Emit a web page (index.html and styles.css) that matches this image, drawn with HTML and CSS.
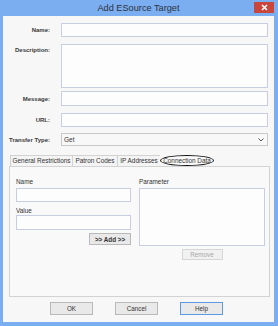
FILE: index.html
```html
<!DOCTYPE html>
<html>
<head>
  <title>Add ESource Target</title>
  <link rel="stylesheet" href="styles.css">
</head>
<body>
  <div class="window">
    <div class="titlebar">
      <span></span>
      <div class="title">Add ESource Target</div>
      <div class="close">
        <svg width="7" height="7" viewBox="0 0 7 7"><path d="M1 1L6 6M6 1L1 6" stroke="#fff" stroke-width="1.6"/></svg>
      </div>
    </div>

    <div class="client">
      <div class="row">
        <span class="lbl">Name:</span>
        <div class="input"></div>
      </div>
      <div class="row row-top gap7">
        <span class="lbl lbl-desc">Description:</span>
        <div class="input area"></div>
      </div>
      <div class="row gap3">
        <span class="lbl">Message:</span>
        <div class="input msg"></div>
      </div>
      <div class="row gap7">
        <span class="lbl">URL:</span>
        <div class="input"></div>
      </div>
      <div class="row gap6">
        <span class="lbl">Transfer Type:</span>
        <div class="input select">
          <span>Get</span>
          <svg width="6" height="4" viewBox="0 0 6 4"><path d="M0.5 0.5L3 3L5.5 0.5" fill="none" stroke="#555" stroke-width="1"/></svg>
        </div>
      </div>

      <div class="tabs">
        <div class="tab t1">General Restrictions</div>
        <div class="tab t2">Patron Codes</div>
        <div class="tab t3">IP Addresses</div>
        <div class="tab active">Connection Data</div>
      </div>
      <div class="panel">
        <div class="col-left">
          <div class="plbl">Name</div>
          <div class="input pin"></div>
          <div class="plbl plbl-value">Value</div>
          <div class="input pin pin-value"></div>
          <div class="btn add">&gt;&gt; Add &gt;&gt;</div>
        </div>
        <div class="col-right">
          <div class="plbl">Parameter</div>
          <div class="input list"></div>
          <div class="btn remove">Remove</div>
        </div>
      </div>

      <div class="actions">
        <div class="btn dlg">OK</div>
        <div class="btn dlg">Cancel</div>
        <div class="btn dlg default">Help</div>
      </div>
    </div>
  </div>
</body>
</html>
```

FILE: styles.css
```css
body { margin: 0; font-family: "Liberation Sans", Arial, sans-serif; }

.window {
  width: 278px; height: 326px; box-sizing: border-box;
  background: #7aaef0; padding: 0 4px 4px 3px;
  display: flex; flex-direction: column;
}
.titlebar {
  height: 17px; display: grid; grid-template-columns: 1fr auto 1fr; align-items: center;
}
.title { font-size: 9.2px; color: #2d3140; }
.close {
  justify-self: end; align-self: start; margin-top: 2px;
  width: 20px; height: 11px; background: #c8463c;
  display: flex; align-items: center; justify-content: center;
}

.client {
  flex: 1; background: #f7f7f7; padding: 7px 4px 7px 0;
  display: flex; flex-direction: column;
}
.row { display: flex; align-items: center; }
.row-top { align-items: flex-start; }
.gap7 { margin-top: 7px; }
.gap6 { margin-top: 6px; }
.gap3 { margin-top: 3px; }
.lbl {
  width: 47px; margin-right: 11px; text-align: right;
  font-size: 6px; font-weight: bold; color: #3a3a3a;
}
.lbl-desc { margin-top: 3px; }

.input {
  width: 207px; height: 14px; box-sizing: border-box;
  border: 1px solid #c6cee0; background: #fdfdfe;
}
.area { height: 44px; }
.msg { height: 15px; }
.select {
  height: 13px; background: #f8f8f8; border-color: #c9c9c9;
  display: flex; align-items: center; justify-content: space-between;
  padding: 0 3px 0 2px; font-size: 6.5px; color: #333;
}

.tabs { display: flex; margin: 9px 0 0 7px; height: 11px; }
.tab {
  box-sizing: border-box; height: 11px; line-height: 10px;
  font-size: 6.4px; color: #333; text-align: center;
  border: 1px solid #d2d2d2; border-bottom: none; border-right: none;
  background: #f4f4f4;
}
.t1 { width: 62px; }
.t2 { width: 45px; }
.t3 { width: 43px; }
.tab.active {
  width: 54px; background: #fafafa;
  border: 1.5px solid #111; border-radius: 50%;
}

.panel {
  height: 131px; box-sizing: border-box; margin-left: 6px;
  border: 1px solid #d3d3d3; background: #f9f9f9;
  padding: 10px 4px 0 6px; display: flex; gap: 8px;
}
.col-left { width: 115px; display: flex; flex-direction: column; }
.col-right { width: 126px; display: flex; flex-direction: column; }
.plbl { font-size: 6.4px; color: #333; line-height: 10px; margin-bottom: 1px; }
.plbl-value { line-height: 9px; margin: 4px 0 0; }
.pin { width: 115px; }
.pin-value { height: 15px; }
.list { width: 126px; height: 58px; }

.btn {
  box-sizing: border-box; display: flex; align-items: center; justify-content: center;
  border: 1px solid #b9b9b9; background: #e9e9e9; font-size: 6.3px; color: #333;
}
.add { align-self: flex-end; width: 42px; height: 12px; margin-top: 3px; font-weight: bold; }
.remove {
  align-self: center; width: 41px; height: 11px; margin-top: 3px;
  color: #a8a8a8; border-color: #d6d6d6; background: #f1f1f1;
}

.actions { display: flex; justify-content: center; gap: 22px; margin-top: 5px; }
.dlg { width: 43px; height: 13px; }
.default { border-color: #5a9ae2; }
```
